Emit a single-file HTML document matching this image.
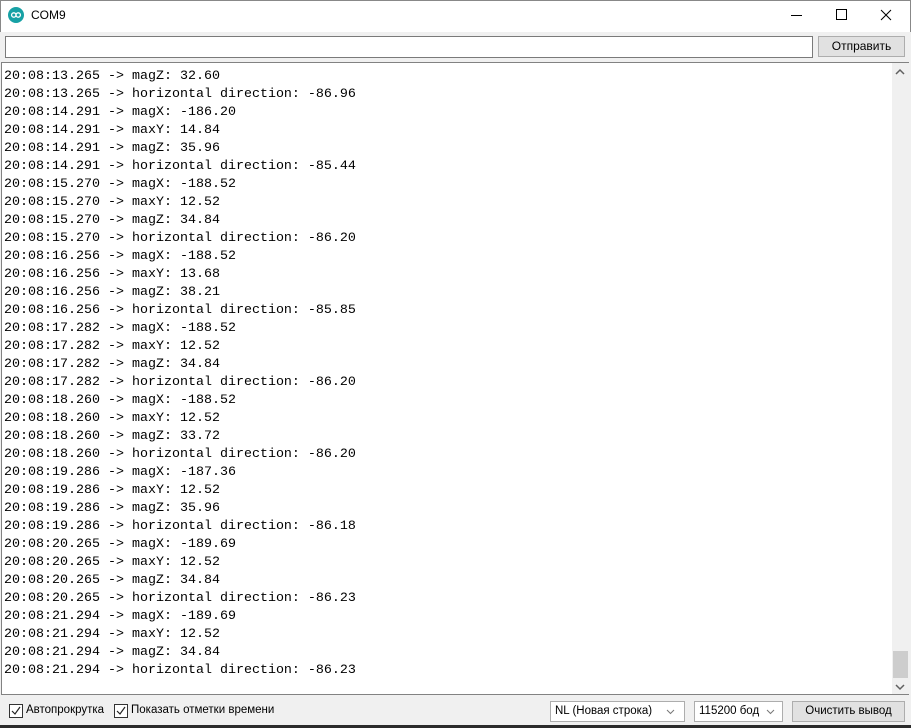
<!DOCTYPE html>
<html><head><meta charset="utf-8"><style>
body{margin:0;width:911px;height:728px;background:#f0f0f0;font-family:"Liberation Sans",sans-serif;position:relative;overflow:hidden}
.t{position:absolute;left:0;top:0;width:909px;height:31px;background:#fff;border:1px solid #888;border-bottom:none}
.abs{position:absolute}
pre{margin:0;font-family:"Liberation Mono",monospace;font-size:13.33px;line-height:18px;color:#000}
.btn{position:absolute;background:#e1e1e1;border:1px solid #adadad;font-size:12px;text-align:center;box-sizing:border-box}
.sel{position:absolute;background:#fff;border:1px solid #adadad;font-size:12px;box-sizing:border-box;padding-left:4px}
.cb{position:absolute;width:12px;height:12px;border:1px solid #333;background:#fff}
.sm{font-size:11.5px}
</style></head><body>
<div class="t"></div>
<div class="abs" style="left:8px;top:7px;width:16px;height:16px;border-radius:50%;background:#17a1a5"></div>
<svg class="abs" style="left:8px;top:7px" width="16" height="16"><g fill="none" stroke="#fff" stroke-width="1.3"><circle cx="5.8" cy="8" r="2.2"/><circle cx="10.2" cy="8" r="2.2"/></g></svg>
<div class="abs" style="left:31px;top:8px;font-size:12px">COM9</div>
<div class="abs" style="left:791px;top:15px;width:11px;height:1px;background:#000"></div>
<div class="abs" style="left:836px;top:9px;width:9px;height:9px;border:1px solid #000"></div>
<svg class="abs" style="left:880px;top:9px" width="12" height="12"><path d="M1 1L11 11M11 1L1 11" stroke="#000" stroke-width="1"/></svg>
<div class="abs" style="left:5px;top:36px;width:806px;height:20px;background:#fff;border:1px solid #7a7a7a"></div>
<div class="btn" style="left:818px;top:36px;width:87px;height:21px;line-height:19px">Отправить</div>
<div class="abs" style="left:1px;top:62px;width:908px;height:633px;background:#fff;border:1px solid #828282;box-sizing:border-box"></div>
<div class="abs" style="left:892px;top:63px;width:17px;height:631px;background:#f0f0f0"></div>
<div class="abs" style="left:893px;top:651px;width:15px;height:27px;background:#cdcdcd"></div>
<svg class="abs" style="left:895px;top:68px" width="10" height="8"><path d="M1 6L5 2L9 6" fill="none" stroke="#606060" stroke-width="1.5"/></svg>
<svg class="abs" style="left:895px;top:683px" width="10" height="8"><path d="M1 2L5 6L9 2" fill="none" stroke="#606060" stroke-width="1.5"/></svg>
<pre class="abs" style="left:4px;top:68px">20:08:13.265 -> magZ: 32.60
20:08:13.265 -> horizontal direction: -86.96
20:08:14.291 -> magX: -186.20
20:08:14.291 -> maxY: 14.84
20:08:14.291 -> magZ: 35.96
20:08:14.291 -> horizontal direction: -85.44
20:08:15.270 -> magX: -188.52
20:08:15.270 -> maxY: 12.52
20:08:15.270 -> magZ: 34.84
20:08:15.270 -> horizontal direction: -86.20
20:08:16.256 -> magX: -188.52
20:08:16.256 -> maxY: 13.68
20:08:16.256 -> magZ: 38.21
20:08:16.256 -> horizontal direction: -85.85
20:08:17.282 -> magX: -188.52
20:08:17.282 -> maxY: 12.52
20:08:17.282 -> magZ: 34.84
20:08:17.282 -> horizontal direction: -86.20
20:08:18.260 -> magX: -188.52
20:08:18.260 -> maxY: 12.52
20:08:18.260 -> magZ: 33.72
20:08:18.260 -> horizontal direction: -86.20
20:08:19.286 -> magX: -187.36
20:08:19.286 -> maxY: 12.52
20:08:19.286 -> magZ: 35.96
20:08:19.286 -> horizontal direction: -86.18
20:08:20.265 -> magX: -189.69
20:08:20.265 -> maxY: 12.52
20:08:20.265 -> magZ: 34.84
20:08:20.265 -> horizontal direction: -86.23
20:08:21.294 -> magX: -189.69
20:08:21.294 -> maxY: 12.52
20:08:21.294 -> magZ: 34.84
20:08:21.294 -> horizontal direction: -86.23</pre>
<div class="cb" style="left:9px;top:704px"></div>
<svg class="abs" style="left:9px;top:704px" width="14" height="14"><path d="M3 7L6 10L11 3" fill="none" stroke="#222" stroke-width="1.2"/></svg>
<div class="abs sm" style="left:26px;top:704px">Автопрокрутка</div>
<div class="cb" style="left:114px;top:704px"></div>
<svg class="abs" style="left:114px;top:704px" width="14" height="14"><path d="M3 7L6 10L11 3" fill="none" stroke="#222" stroke-width="1.2"/></svg>
<div class="abs sm" style="left:131px;top:704px">Показать отметки времени</div>
<div class="sel sm" style="left:550px;top:701px;width:135px;height:21px;line-height:19px">NL (Новая строка)</div>
<svg class="abs" style="left:666px;top:709px" width="9" height="6"><path d="M1 1L4.5 4.5L8 1" fill="none" stroke="#777"/></svg>
<div class="sel sm" style="left:694px;top:701px;width:89px;height:21px;line-height:19px">115200 бод</div>
<svg class="abs" style="left:766px;top:709px" width="9" height="6"><path d="M1 1L4.5 4.5L8 1" fill="none" stroke="#777"/></svg>
<div class="btn sm" style="left:792px;top:701px;width:113px;height:21px;line-height:19px">Очистить вывод</div>
<div class="abs" style="left:0;top:725px;width:911px;height:3px;background:#2b2b2b"></div>
</body></html>
